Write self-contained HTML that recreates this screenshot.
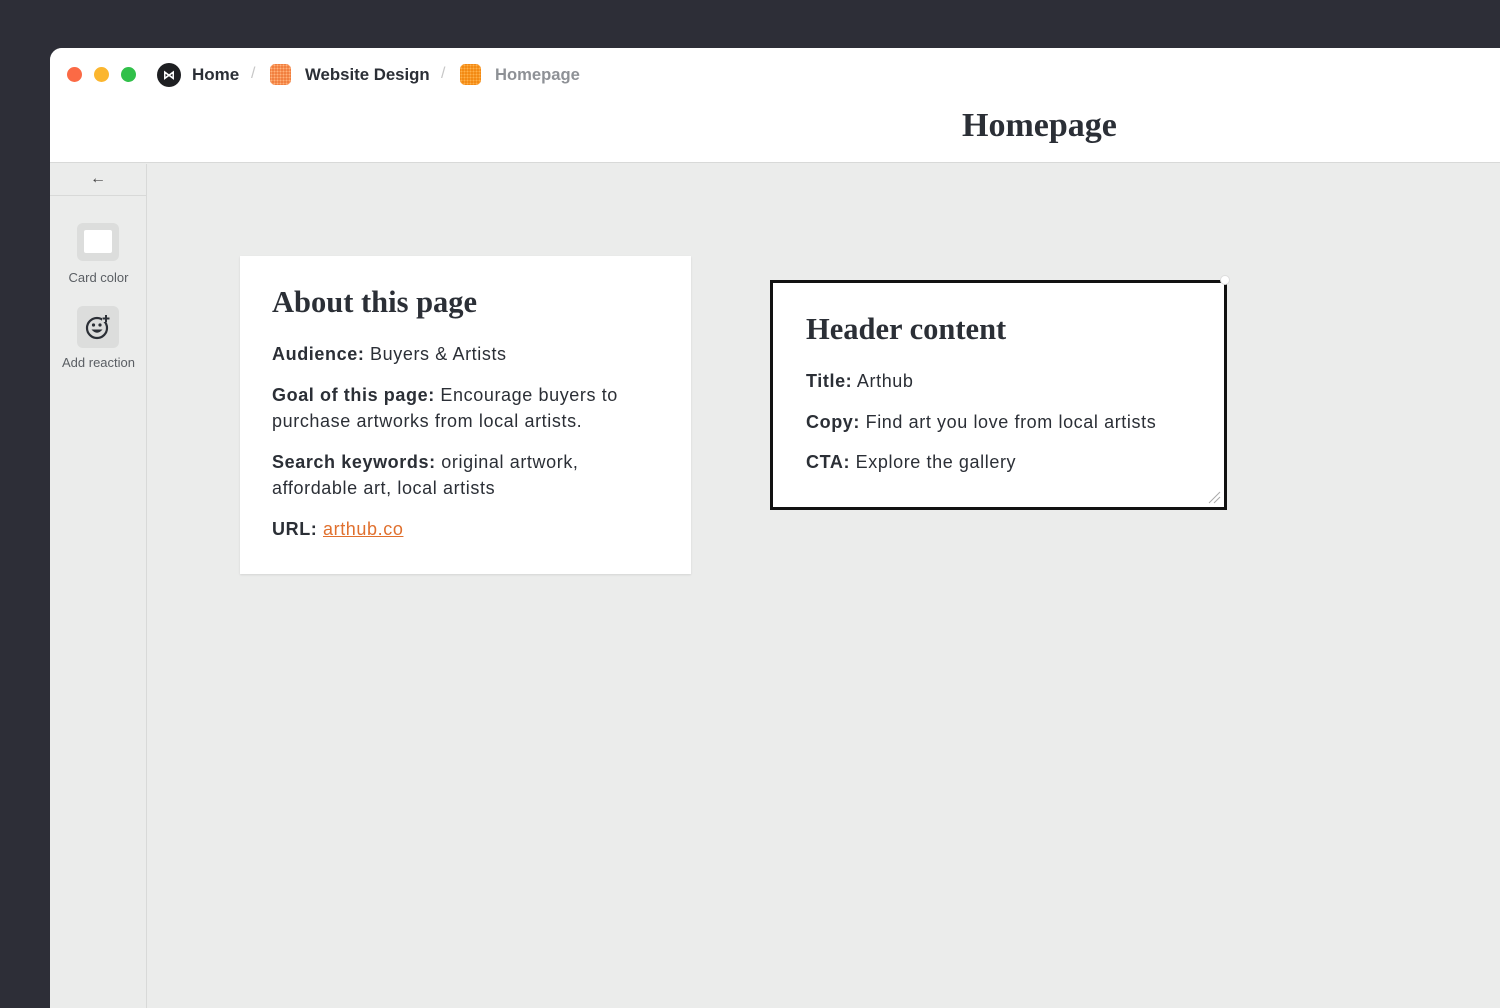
<!DOCTYPE html>
<html><head><meta charset="utf-8"><style>
*{margin:0;padding:0;box-sizing:border-box}
body{width:1500px;height:1000px;background:#2d2e37;position:relative;overflow:hidden;font-family:"Liberation Sans",sans-serif;color:#2b2f36}
.win{position:absolute;left:50px;top:48px;width:1460px;height:960px;background:#ebeceb;border-radius:12px 0 0 0;overflow:hidden}
.top{position:absolute;left:0;top:0;right:0;height:115px;background:#fff;border-bottom:1px solid #d8d9d8}
.dot{position:absolute;top:19px;width:15px;height:15px;border-radius:50%}
.crumb{position:absolute;top:17px;font-size:17px;font-weight:bold;color:#2b2f36}
.sep{position:absolute;top:17px;font-size:16px;color:#c8c8c8}
.ic{position:absolute;top:16px;width:21px;height:21px;border-radius:5px;background:radial-gradient(circle,#ffb27a 0.8px,transparent 1.2px) 0 0/3px 3px,#f07b3a}
h1{position:absolute;left:912px;top:59px;font-family:"Liberation Serif",serif;font-size:34px;font-weight:bold;color:#2b2f36}
.side{position:absolute;left:0;top:116px;width:97px;bottom:0;background:#ebeceb;border-right:1px solid #d8d9d8}
.lbl{position:absolute;width:97px;text-align:center;font-size:13px;color:#5a5e63}
.card{position:absolute;background:#fff;padding:0 32px}
.card h2{font-family:"Liberation Serif",serif;font-size:30.5px;font-weight:bold;color:#2b2f36}
.card p{font-size:18px;letter-spacing:0.6px;line-height:26.5px;color:#2b2f36;margin-top:14px}
a{color:#e0702e;text-decoration:underline}
</style></head><body>
<div class="win">
 <div class="top">
  <div class="dot" style="left:17px;background:#fb6a45"></div>
  <div class="dot" style="left:44px;background:#fbb62f"></div>
  <div class="dot" style="left:71px;background:#31c04a"></div>
  <div style="position:absolute;left:107px;top:15px;width:24px;height:24px;border-radius:50%;background:#1e1f22;color:#fff;font-size:12px;text-align:center;line-height:24px;font-weight:bold">⋈</div>
  <div class="crumb" style="left:142px">Home</div>
  <div class="sep" style="left:201px">/</div>
  <div class="ic" style="left:220px"></div>
  <div class="crumb" style="left:255px;font-size:16.8px">Website Design</div>
  <div class="sep" style="left:391px">/</div>
  <div class="ic" style="left:410px;background:radial-gradient(circle,#ffb04a 0.8px,transparent 1.2px) 0 0/3px 3px,#f2870f"></div>
  <div class="crumb" style="left:445px;color:#8e9196;font-size:16.6px">Homepage</div>
  <h1>Homepage</h1>
 </div>
 <div class="side">
  <div style="height:32px;border-bottom:1px solid #d8d9d8;text-align:center;font-size:16px;line-height:30px;color:#444">←</div>
  <div style="position:absolute;left:27px;top:59px;width:42px;height:38px;border-radius:6px;background:#dcdddc"><div style="position:absolute;left:7px;top:7px;width:28px;height:23px;background:#fff;border-radius:2px"></div></div>
  <div class="lbl" style="top:106px">Card color</div>
  <div style="position:absolute;left:27px;top:142px;width:42px;height:42px;border-radius:6px;background:#dcdddc">
   <svg width="42" height="42" viewBox="0 0 42 42"><circle cx="20" cy="22" r="10" fill="none" stroke="#2b2f36" stroke-width="2.2"/><circle cx="16.5" cy="19" r="1.6" fill="#2b2f36"/><circle cx="23" cy="19" r="1.6" fill="#2b2f36"/><path d="M14.5 23.5 Q20 30 25.5 23.5 Z" fill="#2b2f36"/><rect x="25" y="9" width="8" height="7" fill="#dcdddc"/><path d="M29 9v7M25.5 12.5h7" stroke="#2b2f36" stroke-width="2"/></svg>
  </div>
  <div class="lbl" style="top:191px">Add reaction</div>
 </div>
 <div class="card" style="left:190px;top:208px;width:451px;height:318px;padding-top:29px;box-shadow:0 1px 2px rgba(0,0,0,.1)">
  <h2>About this page</h2>
  <p style="margin-top:21px"><b>Audience:</b> Buyers &amp; Artists</p>
  <p><b>Goal of this page:</b> Encourage buyers to purchase artworks from local artists.</p>
  <p><b>Search keywords:</b> original artwork, affordable art, local artists</p>
  <p><b>URL:</b> <a>arthub.co</a></p>
 </div>
 <div class="card" style="left:720px;top:232px;width:457px;height:230px;border:3px solid #111;padding:29px 32px 0 33px">
  <h2>Header content</h2>
  <p style="margin-top:21px"><b>Title:</b> Arthub</p>
  <p><b>Copy:</b> Find art you love from local artists</p>
  <p><b>CTA:</b> Explore the gallery</p>
  <svg style="position:absolute;right:3px;bottom:3px" width="14" height="14"><path d="M2 13L13 2M7 13L13 7" stroke="#aaa" stroke-width="1"/></svg>
  <div style="position:absolute;right:-6px;top:-8px;width:10px;height:10px;border-radius:50%;background:#fff;border:1px solid #ddd"></div>
 </div>
</div>
</body></html>
